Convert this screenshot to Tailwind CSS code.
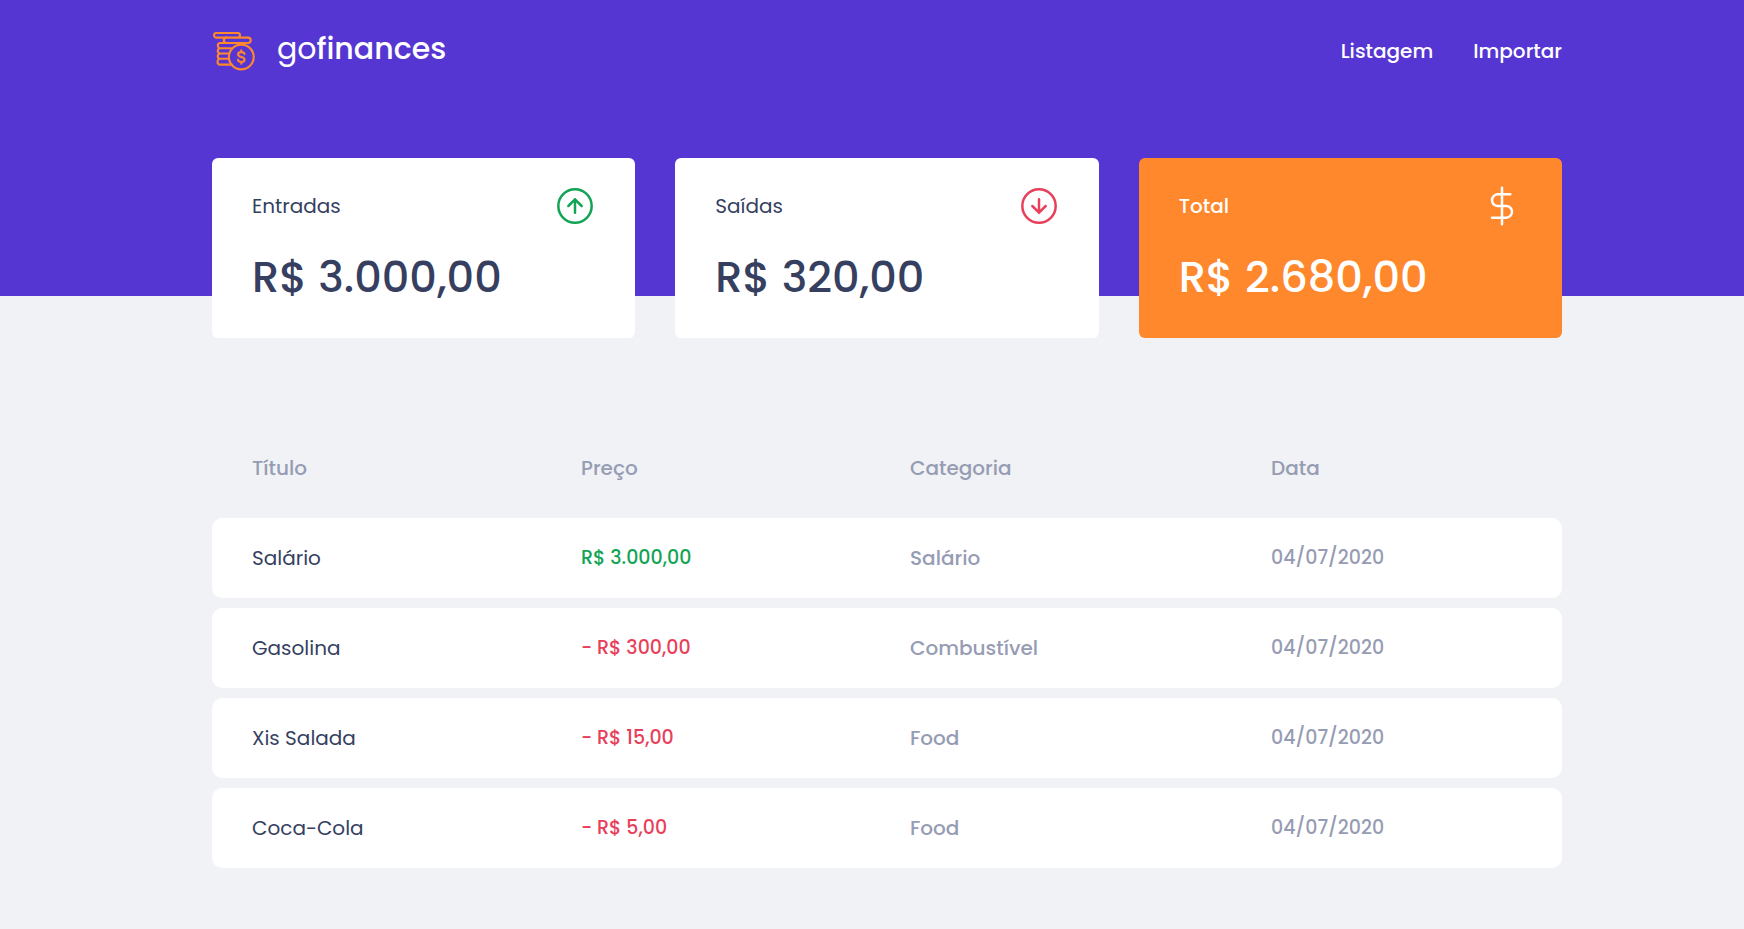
<!DOCTYPE html>
<html lang="pt-BR">
<head>
<meta charset="utf-8">
<meta name="viewport" content="width=device-width, initial-scale=1">
<title>GoFinances</title>
<script src="https://cdn.jsdelivr.net/npm/@tailwindcss/browser@4"></script>
</head>
<body class="min-h-screen bg-[#f0f2f5] font-['Poppins','Inter',sans-serif] text-xl text-[#363f5f]">
<header class="h-[296px] bg-[#5636d3] pl-[30px]">
  <div class="mx-auto flex max-w-[1350px] items-center justify-between pt-[27px]">
    <a href="#" aria-label="gofinances" class="flex items-center gap-[21px] text-white">
      <svg class="h-11 w-11" viewBox="0 0 44 44" fill="none" stroke="#ff872c" stroke-width="2.1" stroke-linejoin="round" stroke-linecap="round" aria-hidden="true">
        <rect x="2" y="6" width="26" height="4.600" rx="2.300"/>
        <path d="M14.500 10.600a2.500 2.500 0 0 0 0 5.400H36a2.500 2.500 0 0 0 0-5.400H27"/>
        <path d="M15 16H8.400a2.500 2.500 0 0 0 0 5.200H19.500M8.400 21.200a2.600 2.600 0 0 0 0 5.300H16.500M8.400 26.500a2.600 2.600 0 0 0 0 5.300H16.500M8.400 31.800a2.900 2.900 0 0 0 0 5.800H20"/>
        <circle cx="29.300" cy="30" r="12.400"/>
        <path d="M32.500 27.100c-.3-1.300-1.500-2-3.200-2-1.900 0-3.200.9-3.200 2.400 0 3.300 6.500 1.700 6.500 5 0 1.500-1.400 2.500-3.300 2.500-1.800 0-3.100-.8-3.400-2.200M29.300 23.300v1.800M29.300 35v1.800"/>
      </svg>
      <span class="text-3xl leading-11">go<span class="font-medium">finances</span></span>
    </a>
    <nav class="flex gap-10 pt-1 font-medium text-white">
      <a href="#">Listagem</a>
      <a href="#">Importar</a>
    </nav>
  </div>
</header>
<main class="-mt-[138px] pl-[30px]">
  <div class="mx-auto max-w-[1350px]">
    <section class="grid grid-cols-3 gap-10" aria-label="Resumo">
      <article class="h-[180px] rounded-md bg-white px-10 pt-7">
        <header class="flex items-center justify-between">
          <h2>Entradas</h2>
          <svg class="h-10 w-10" viewBox="0 0 24 24" fill="none" stroke="#12a454" stroke-width="1.5" stroke-linecap="round" stroke-linejoin="round" aria-hidden="true"><circle cx="12" cy="12" r="10"/><path d="M16 12l-4-4-4 4M12 16V8"/></svg>
        </header>
        <p class="mt-5 text-[43px] leading-[62px] font-medium">R$ 3.000,00</p>
      </article>
      <article class="h-[180px] rounded-md bg-white px-10 pt-7">
        <header class="flex items-center justify-between">
          <h2>Saídas</h2>
          <svg class="h-10 w-10" viewBox="0 0 24 24" fill="none" stroke="#e83f5b" stroke-width="1.5" stroke-linecap="round" stroke-linejoin="round" aria-hidden="true"><circle cx="12" cy="12" r="10"/><path d="M8 12l4 4 4-4M12 8v8"/></svg>
        </header>
        <p class="mt-5 text-[43px] leading-[62px] font-medium">R$ 320,00</p>
      </article>
      <article class="h-[180px] rounded-md bg-[#ff872c] px-10 pt-7 text-white">
        <header class="flex items-center justify-between">
          <h2 class="font-medium">Total</h2>
          <svg class="h-10 w-10" viewBox="0 0 24 24" fill="none" stroke="currentColor" stroke-width="1.5" stroke-linecap="round" stroke-linejoin="round" aria-hidden="true"><path d="M12 1v22M17 5H9.500a3.500 3.500 0 0 0 0 7h5a3.500 3.500 0 0 1 0 7H6"/></svg>
        </header>
        <p class="mt-5 text-[43px] leading-[62px] font-medium">R$ 2.680,00</p>
      </article>
    </section>
    <table class="mt-20 w-full table-fixed border-separate border-spacing-x-0 border-spacing-y-2.5 text-left text-[#969cb3]">
      <colgroup><col class="w-[329px]"><col class="w-[329px]"><col class="w-[361px]"><col></colgroup>
      <thead>
        <tr class="h-20">
          <th class="px-10 font-medium">Título</th>
          <th class="px-10 font-medium">Preço</th>
          <th class="px-10 font-medium">Categoria</th>
          <th class="px-10 font-medium">Data</th>
        </tr>
      </thead>
      <tbody>
        <tr class="h-20">
          <td class="rounded-l-[10px] bg-white px-10 text-[#363f5f]">Salário</td>
          <td class="bg-white px-10 text-[19px] font-medium text-[#12a454]">R$ 3.000,00</td>
          <td class="bg-white px-10 font-medium">Salário</td>
          <td class="rounded-r-[10px] bg-white px-10 text-[19px] font-medium">04/07/2020</td>
        </tr>
        <tr class="h-20">
          <td class="rounded-l-[10px] bg-white px-10 text-[#363f5f]">Gasolina</td>
          <td class="bg-white px-10 text-[19px] font-medium text-[#e83f5b]">- R$ 300,00</td>
          <td class="bg-white px-10 font-medium">Combustível</td>
          <td class="rounded-r-[10px] bg-white px-10 text-[19px] font-medium">04/07/2020</td>
        </tr>
        <tr class="h-20">
          <td class="rounded-l-[10px] bg-white px-10 text-[#363f5f]">Xis Salada</td>
          <td class="bg-white px-10 text-[19px] font-medium text-[#e83f5b]">- R$ 15,00</td>
          <td class="bg-white px-10 font-medium">Food</td>
          <td class="rounded-r-[10px] bg-white px-10 text-[19px] font-medium">04/07/2020</td>
        </tr>
        <tr class="h-20">
          <td class="rounded-l-[10px] bg-white px-10 text-[#363f5f]">Coca-Cola</td>
          <td class="bg-white px-10 text-[19px] font-medium text-[#e83f5b]">- R$ 5,00</td>
          <td class="bg-white px-10 font-medium">Food</td>
          <td class="rounded-r-[10px] bg-white px-10 text-[19px] font-medium">04/07/2020</td>
        </tr>
      </tbody>
    </table>
  </div>
</main>
</body>
</html>
